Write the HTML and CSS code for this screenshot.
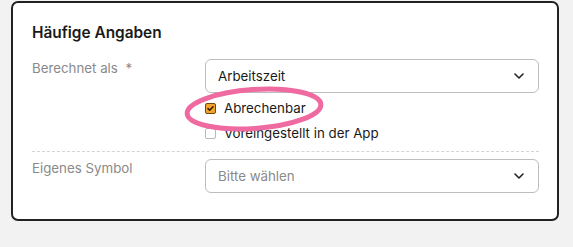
FILE: index.html
```
<!DOCTYPE html>
<html lang="de">
<head>
<meta charset="utf-8">
<link rel="stylesheet" href="styles.css">
</head>
<body>
<div class="card">
  <h2 class="title">Häufige Angaben</h2>
  <div class="row first">
    <div class="label">Berechnet als <span class="req">*</span></div>
    <div class="field">
      <div class="select"><span class="value">Arbeitszeit</span>
        <svg class="chev" width="10" height="6" viewBox="0 0 10 6"><path d="M1 1l4 4 4-4" fill="none" stroke="#222" stroke-width="1.6" stroke-linecap="round" stroke-linejoin="round"/></svg>
      </div>
      <div class="check">
        <span class="box on"><svg width="9" height="9" viewBox="0 0 9 9"><path d="M2 4.6l1.7 1.7L7 2.8" fill="none" stroke="#2a1a00" stroke-width="1.5" stroke-linecap="round" stroke-linejoin="round"/></svg></span>
        <span class="clabel">Abrechenbar</span>
      </div>
      <div class="check">
        <span class="box"></span>
        <span class="clabel">Voreingestellt in der App</span>
      </div>
    </div>
  </div>
  <div class="row second">
    <div class="label">Eigenes Symbol</div>
    <div class="field">
      <div class="select"><span class="placeholder">Bitte wählen</span>
        <svg class="chev" width="10" height="6" viewBox="0 0 10 6"><path d="M1 1l4 4 4-4" fill="none" stroke="#222" stroke-width="1.6" stroke-linecap="round" stroke-linejoin="round"/></svg>
      </div>
    </div>
  </div>
  <svg class="circle" width="160" height="60" viewBox="0 0 160 60"><ellipse cx="80" cy="30" rx="67" ry="19.5" fill="none" stroke="#ef6aa0" stroke-width="5" transform="rotate(-4 80 30)"/></svg>
</div>
</body>
</html>
```
FILE: styles.css
```
html, body { margin: 0; padding: 0; }
body {
  background: #f2f2f2;
  font-family: Inter, "Noto Sans", "Liberation Sans", sans-serif;
  width: 573px;
  height: 247px;
  overflow: hidden;
}
.card {
  position: relative;
  box-sizing: border-box;
  margin: 1px 0 0 11px;
  width: 548px;
  height: 220px;
  background: #fff;
  border: 2px solid #222;
  border-radius: 7px;
  padding: 20px 18px 0 19px;
}
.title {
  margin: 0;
  font-size: 15.4px;
  line-height: 20px;
  font-weight: 600;
  color: #1a1a1a;
}
.row {
  display: grid;
  grid-template-columns: 173px 1fr;
}
.row.first {
  margin-top: 16px;
  padding-bottom: 8px;
  border-bottom: 1px dashed #d4d4d4;
}
.row.second { padding-top: 7px; }
.label {
  font-size: 13.3px;
  line-height: 18px;
  color: #8a8a8a;
}
.req { margin-left: 4px; }
.field { display: flex; flex-direction: column; }
.select {
  box-sizing: border-box;
  height: 34px;
  border: 1px solid #bdbdbd;
  border-radius: 6px;
  display: flex;
  align-items: center;
  justify-content: space-between;
  padding: 0 14px 0 12px;
  font-size: 13.3px;
}
.value { color: #1a1a1a; }
.placeholder { color: #8a8a8a; }
.chev { display: block; }
.check {
  display: flex;
  align-items: center;
  height: 20px;
  gap: 8px;
  font-size: 13.3px;
  color: #1a1a1a;
  margin-top: 5px;
}
.box {
  box-sizing: border-box;
  width: 11px;
  height: 11px;
  border: 1px solid #b8b8b8;
  border-radius: 2px;
  background: #fff;
  display: flex;
  align-items: center;
  justify-content: center;
}
.box.on {
  background: #f3a42c;
  border-color: #6b4a10;
}
.box svg { display: block; }
.circle {
  position: absolute;
  left: 161px;
  top: 76px;
}
```
